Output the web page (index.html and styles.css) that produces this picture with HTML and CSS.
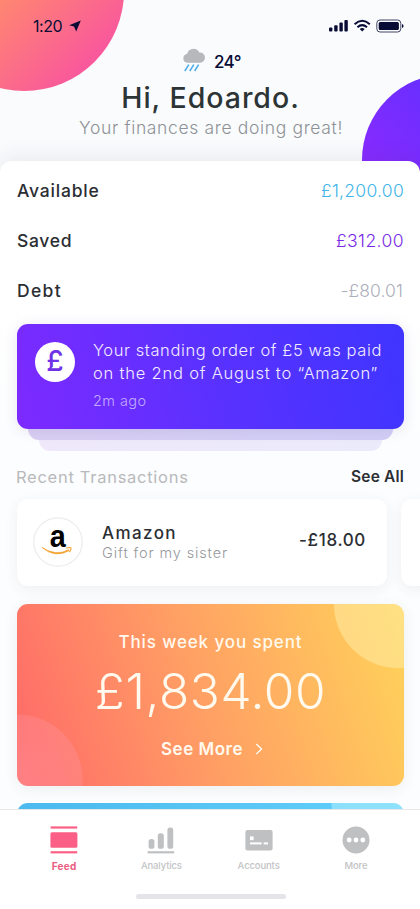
FILE: index.html
```html
<!DOCTYPE html>
<html lang="en">
<head>
<meta charset="utf-8">
<meta name="viewport" content="width=device-width, initial-scale=1">
<title>Feed</title>
<link rel="stylesheet" href="styles.css">
</head>
<body>
<div class="screen">
  <span class="blob blob-pink"></span>
  <span class="blob blob-purple"></span>

  <div class="status">
    <div class="clock">1:20
      <svg width="12" height="12" viewBox="0 0 12 12"><path d="M11.8 0.4 L0.2 5.2 L5 6.6 L7.2 11.6 Z" fill="#080c35"/></svg>
    </div>
    <svg class="signals" width="76" height="14" viewBox="0 0 76 14" fill="#080c35">
      <rect x="1" y="8.6" width="3.4" height="4" rx="1"/>
      <rect x="6.2" y="6.2" width="3.4" height="6.4" rx="1"/>
      <rect x="11.4" y="3.6" width="3.4" height="9" rx="1"/>
      <rect x="16.4" y="1" width="3.4" height="11.6" rx="1"/>
      <g fill="none" stroke="#080c35" stroke-width="2">
        <path d="M26.6 5.2 Q34.2 -1.6 41.8 5.2"/>
        <path d="M29.4 8.2 Q34.2 4 39 8.2"/>
      </g>
      <path d="M34.2 12.6 L31.7 10 Q34.2 8 36.7 10 Z"/>
      <rect x="48.8" y="1" width="24" height="12" rx="3.2" fill="none" stroke="#080c35" stroke-opacity=".75"/>
      <rect x="50.7" y="2.9" width="20.2" height="8.2" rx="1.5"/>
      <path d="M74 5 Q75.6 5.6 75.6 7 Q75.6 8.4 74 9 Z"/>
    </svg>
  </div>

  <header class="greeting">
    <div class="weather">
      <svg width="24" height="24" viewBox="0 0 24 24">
        <path d="M5.2 14.8 A4.4 4.4 0 0 1 5 6.1 A6.6 6.6 0 0 1 17.3 4.4 A5.2 5.2 0 0 1 18.2 14.8 Z" fill="#b7b8bc"/>
        <g stroke="#52aee8" stroke-width="1.6"><path d="M6.8 16.6 L2.8 23"/><path d="M11.8 16.6 L7.8 23"/><path d="M16.6 16.6 L12.6 23"/></g>
      </svg>
      <span class="temp">24°</span>
    </div>
    <h1>Hi, Edoardo.</h1>
    <p>Your finances are doing great!</p>
  </header>

  <main class="sheet">
    <dl class="balances">
      <div><dt class="l1">Available</dt><dd class="blue">£1,200.00</dd></div>
      <div><dt class="l2">Saved</dt><dd class="purple">£312.00</dd></div>
      <div><dt class="l3">Debt</dt><dd class="grey">-£80.01</dd></div>
    </dl>

    <section class="stack">
      <article class="notice">
        <span class="pound">£</span>
        <div>
          <p class="line1">Your standing order of £5 was paid</p>
          <p class="line2">on the 2nd of August to “Amazon”</p>
          <time>2m ago</time>
        </div>
      </article>
      <div class="under under-1"></div>
      <div class="under under-2"></div>
    </section>

    <div class="section-head"><h2>Recent Transactions</h2><a>See All</a></div>

    <div class="carousel">
      <article class="transaction">
        <svg class="merchant" width="50" height="50" viewBox="0 0 50 50">
          <circle cx="25" cy="25" r="24.2" fill="#fff" stroke="#ececee" stroke-width="1.2"/>
          <text class="mark" x="16.8" y="29.6" textLength="16" lengthAdjust="spacingAndGlyphs">a</text>
          <path d="M9.2 30.6 Q23 39.6 35.6 32.8 L36 33.7 Q22 41.4 9.2 30.6 Z" fill="#f3a12c" stroke="#f3a12c" stroke-width=".7" stroke-linejoin="round"/>
          <path d="M33.2 31.2 Q36.6 29.9 38 31 Q38.2 33 36.4 35.2" fill="none" stroke="#f3a12c" stroke-width="1.1"/>
        </svg>
        <div class="details"><h3>Amazon</h3><p>Gift for my sister</p></div>
        <span class="amount">-£18.00</span>
      </article>
      <article class="transaction"></article>
    </div>

    <section class="spent">
      <p class="spent-title">This week you spent</p>
      <p class="spent-total">£1,834.00</p>
      <a class="more">See More
        <svg width="8" height="12" viewBox="0 0 8 12"><path d="M1.3 1 L6.6 6 L1.3 11" fill="none" stroke="#fff" stroke-width="1.2"/></svg>
      </a>
    </section>
    <section class="next-card"></section>
  </main>

  <nav class="tabs">
    <a class="tab active">
      <svg width="28" height="28" viewBox="0 0 28 28" fill="#fc5f85"><rect x=".6" y=".4" width="26.6" height="2.2"/><rect x=".4" y="6.2" width="27" height="15.6" rx="1.6"/><rect x=".6" y="25.2" width="26.6" height="2.2"/></svg>
      <span>Feed</span>
    </a>
    <a class="tab">
      <svg width="28" height="28" viewBox="0 0 28 28" fill="#bfc0c2"><rect x="1.6" y="13" width="5.8" height="9.8" rx="2.6"/><rect x="10.8" y="7.2" width="6" height="15.6" rx="2.6"/><rect x="20.4" y="1.4" width="5.8" height="21.4" rx="2.6"/><rect x=".6" y="25.2" width="26.6" height="2.2"/></svg>
      <span>Analytics</span>
    </a>
    <a class="tab">
      <svg width="28" height="28" viewBox="0 0 28 28" fill="#bfc0c2"><rect x=".4" y="4" width="27.2" height="20.4" rx="2"/><g fill="#fff"><rect x="5" y="10.4" width="3.6" height="3.8"/><rect x="5" y="16.4" width="11.6" height="2"/><rect x="18.6" y="16.4" width="4.4" height="2"/></g></svg>
      <span>Accounts</span>
    </a>
    <a class="tab">
      <svg width="28" height="28" viewBox="0 0 28 28"><circle cx="14" cy="14" r="13.5" fill="#bfc0c2"/><g fill="#fff"><circle cx="7.2" cy="14" r="2.4"/><circle cx="14" cy="14" r="2.4"/><circle cx="20.8" cy="14" r="2.4"/></g></svg>
      <span>More</span>
    </a>
    <i class="home-bar"></i>
  </nav>
</div>
</body>
</html>
```
FILE: styles.css
```css
* { box-sizing: border-box; margin: 0; padding: 0; }
body { font-family: Inter, "Liberation Sans", sans-serif; color: #2b2e33; }
svg { display: block; flex: none; }

.screen {
  position: relative;
  display: flex;
  flex-direction: column;
  width: 420px;
  height: 909px;
  overflow: hidden;
  background: #f9fbfd;
}

.blob { position: absolute; border-radius: 50%; }
.blob-pink { left: -76px; top: -109px; width: 200px; height: 200px; background: linear-gradient(135deg, #ff8c6c 42%, #f9589c 85%); }
.blob-purple { left: 362px; top: 74px; width: 172px; height: 172px; background: linear-gradient(50deg, #8a2bff 20%, #6a2eff 62%); }

.status {
  position: relative;
  display: flex;
  justify-content: space-between;
  align-items: center;
  height: 51px;
  padding: 0 16px 0 33px;
}
.clock { display: flex; align-items: center; gap: 7px; font-size: 16px; letter-spacing: -.42px; color: #080c35; }

.greeting {
  position: relative;
  height: 110px;
  text-align: center;
}
.weather { display: flex; justify-content: center; align-items: center; gap: 8px; height: 22px; padding-left: 3px; }
.weather svg { margin-top: -5px; }
.temp { font-size: 17px; font-weight: 500; letter-spacing: -.5px; color: #080c35; }
.greeting h1 { font-size: 28.5px; font-weight: 500; line-height: 34px; margin-top: 8px; padding-left: 1px; letter-spacing: .98px; color: #2d3436; }
.greeting p { font-size: 17.5px; font-weight: 300; line-height: 26px; padding-left: 2px; letter-spacing: .65px; color: #8f9296; }

.sheet {
  position: relative;
  flex: 1;
  min-height: 0;
  overflow: hidden;
  padding: 4px 16px 0 17px;
  border-radius: 12px 12px 0 0;
  background: linear-gradient(#fff 20%, #fcfdfe 45%);
  box-shadow: 0 -3px 22px rgba(40, 45, 60, .09);
}

.balances div { display: flex; justify-content: space-between; align-items: center; height: 50.3px; font-size: 17.5px; }
.balances dt { font-weight: 500; }
.balances dd { font-weight: 300; }
.l1 { letter-spacing: .8px; }
.l2 { letter-spacing: .7px; }
.l3 { letter-spacing: 1.3px; }
.blue { color: #42b5e8; letter-spacing: .28px; }
.purple { color: #7a2be6; letter-spacing: .43px; }
.grey { color: #adafbc; padding-right: 1px; letter-spacing: .1px; }

.stack { margin-top: 8.6px; height: 134.4px; }
.notice {
  position: relative;
  z-index: 1;
  display: flex;
  align-items: flex-start;
  gap: 18px;
  height: 104.5px;
  padding: 14.4px 18px 0;
  border-radius: 11px;
  background: linear-gradient(75deg, #7d2aff 0%, #5a31ff 50%, #3f35ff 100%);
  box-shadow: 0 2px 14px rgba(70, 60, 160, .12);
  color: #f3ecff;
  white-space: nowrap;
}
.pound { flex: none; width: 40px; height: 40px; margin-top: 3px; border-radius: 50%; background: #fff; color: #7032e6; font-size: 28px; font-weight: 500; line-height: 38px; text-align: center; }
.notice p { font-size: 16.5px; font-weight: 300; line-height: 23.6px; }
.line1 { letter-spacing: .59px; }
.line2 { letter-spacing: .8px; }
.notice time { display: block; margin-top: 6px; font-size: 14.5px; font-weight: 300; line-height: 18px; letter-spacing: .42px; color: rgba(255, 255, 255, .6); }
.under { height: 11px; border-radius: 0 0 11px 11px; }
.under-1 { margin: 0 11px; background: linear-gradient(90deg, #dacff3, #d2d0f6); }
.under-2 { margin: 0 22px; background: linear-gradient(90deg, #eee8fa, #ebeafb); }

.section-head { display: flex; justify-content: space-between; align-items: center; height: 36px; margin-left: -1px; }
.section-head h2 { font-size: 16.5px; font-weight: 400; letter-spacing: .72px; color: #b8b9bb; }
.section-head a { font-size: 15.5px; font-weight: 600; letter-spacing: .18px; }

.carousel { display: flex; gap: 14px; margin-top: 4px; }
.transaction {
  flex: none;
  display: flex;
  align-items: center;
  width: 370px;
  height: 87.5px;
  padding: 0 21px 0 16px;
  border-radius: 11px;
  background: #fff;
  box-shadow: 0 3px 14px rgba(50, 60, 80, .07);
}
.merchant { margin-top: -1px; }
.mark { font: bold 32px "Liberation Sans", Arial, sans-serif; fill: #000; }
.details { flex: 1; margin-left: 19px; padding-bottom: 1px; }
.details h3 { font-size: 17px; font-weight: 500; line-height: 20px; letter-spacing: 1.4px; }
.details p { font-size: 14.5px; font-weight: 300; line-height: 19px; letter-spacing: .86px; color: #96989c; }
.amount { font-size: 17px; font-weight: 500; letter-spacing: .65px; padding-bottom: 5px; }

.spent {
  height: 181.5px;
  margin-top: 18px;
  padding-top: 25.5px;
  border-radius: 11px;
  background:
    radial-gradient(circle at 381px 0, rgba(255, 238, 170, .5) 63.5px, transparent 64.5px),
    radial-gradient(circle at 0 176px, rgba(255, 150, 165, .45) 0, rgba(255, 150, 165, .3) 65px, transparent 66px),
    linear-gradient(72deg, #ff6e68 5%, #ffa064 48%, #ffd25a 98%);
  box-shadow: 0 3px 14px rgba(50, 60, 80, .08);
  color: #fff9ee;
  text-align: center;
}
.spent-title { font-size: 17px; font-weight: 500; line-height: 25px; letter-spacing: .88px; }
.spent-total { font-size: 49.5px; font-weight: 300; line-height: 60px; margin-top: 6.5px; letter-spacing: .6px; }
.more { display: flex; justify-content: center; align-items: center; gap: 12px; height: 26px; margin-top: 15px; padding-left: 3px; font-size: 17px; font-weight: 600; letter-spacing: .5px; }

.next-card {
  height: 60px;
  margin-top: 17.5px;
  border-radius: 11px;
  background: radial-gradient(circle at 381px 0, rgba(165, 235, 255, .65) 66px, transparent 67px), linear-gradient(90deg, #4cb9ef, #62d0fa);
}

.tabs {
  position: relative;
  flex: none;
  display: grid;
  grid-template-columns: repeat(4, 1fr);
  height: 100px;
  padding: 15.5px 15.5px 0 15.5px;
  border-top: 1px solid #e8e8ea;
  background: #fff;
}
.tab { display: flex; flex-direction: column; align-items: center; gap: 5px; font-size: 9.5px; font-weight: 500; line-height: 12px; letter-spacing: -.13px; color: #c3c4c6; }
.tab span { margin-top: 1px; }
.active { font-size: 10px; font-weight: 700; letter-spacing: .3px; color: #ea5c80; }
.home-bar { position: absolute; left: 136px; bottom: 10px; width: 150px; height: 5.5px; border-radius: 3px; background: #e4e4e9; }
```
